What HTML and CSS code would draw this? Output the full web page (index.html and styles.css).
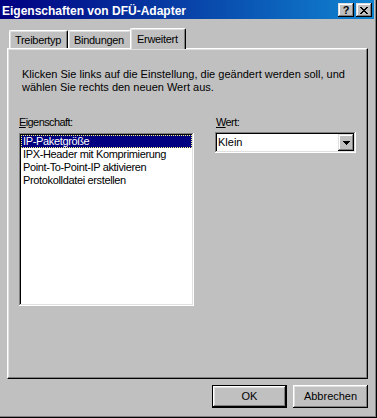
FILE: index.html
```html
<!DOCTYPE html>
<html lang="de">
<head>
<meta charset="utf-8">
<title>Eigenschaften von DFÜ-Adapter</title>
<link rel="stylesheet" href="styles.css">
</head>
<body>
<div class="window">
  <div class="titlebar">
    <span class="title">Eigenschaften von DFÜ-Adapter</span>
    <div class="title-buttons">
      <div class="tbtn help">?</div>
      <div class="tbtn close">
        <svg width="8" height="7" viewBox="0 0 8 7" shape-rendering="crispEdges">
          <path fill="#000" d="M0 0h2v1H0zM6 0h2v1H6zM1 1h2v1H1zM5 1h2v1H5zM2 2h4v1H2zM3 3h2v1H3zM2 4h4v1H2zM1 5h2v1H1zM5 5h2v1H5zM0 6h2v1H0zM6 6h2v1H6z"/>
        </svg>
      </div>
    </div>
  </div>
  <div class="body">
    <div class="tabs">
      <div class="tab tab-treiber">Treibertyp</div>
      <div class="tab tab-bind">Bindungen</div>
      <div class="tab tab-erw active">Erweitert</div>
    </div>
    <div class="panel">
      <p class="desc">Klicken Sie links auf die Einstellung, die geändert werden soll, und wählen Sie rechts den neuen Wert aus.</p>
      <div class="fields">
        <div class="field-left">
          <div class="label"><u>E</u>igenschaft:</div>
          <div class="listbox">
            <div class="item selected">IP-Paketgröße</div>
            <div class="item">IPX-Header mit Komprimierung</div>
            <div class="item">Point-To-Point-IP aktivieren</div>
            <div class="item">Protokolldatei erstellen</div>
          </div>
        </div>
        <div class="field-right">
          <div class="label label-wert"><u>W</u>ert:</div>
          <div class="combo">
            <span class="combo-value">Klein</span>
            <div class="combo-arrow">
              <svg width="7" height="4" viewBox="0 0 7 4" shape-rendering="crispEdges"><path fill="#000" d="M0 0h7v1H0zM1 1h5v1H1zM2 2h3v1H2zM3 3h1v1H3z"/></svg>
            </div>
          </div>
        </div>
      </div>
    </div>
    <div class="buttons">
      <div class="btn default"><span class="btn-inner">OK</span></div>
      <div class="btn"><span class="btn-inner">Abbrechen</span></div>
    </div>
  </div>
</div>
</body>
</html>
```

FILE: styles.css
```css
* { box-sizing: border-box; }
html, body { margin: 0; padding: 0; }
body {
  width: 377px;
  height: 418px;
  overflow: hidden;
  background: #c0c0c0;
  font-family: "Liberation Sans", Arial, sans-serif;
  font-size: 11px;
  color: #000;
}
.window {
  width: 377px;
  height: 418px;
  background: #c0c0c0;
  padding-right: 3px;
  box-shadow: inset -1px -1px #000, inset -2px -2px #808080;
  display: flex;
  flex-direction: column;
}
.titlebar {
  height: 19px;
  flex: none;
  background: linear-gradient(to right, #000080, #1084d0);
  display: flex;
  align-items: flex-start;
  justify-content: space-between;
  padding: 0 2px 0 2px;
}
.title {
  color: #fff;
  font-weight: bold;
  font-size: 12px;
  line-height: 14px;
  margin-top: 4px;
}
.title-buttons { display: flex; gap: 2px; margin-top: 3px; }
.tbtn {
  width: 16px;
  height: 14px;
  background: #c0c0c0;
  box-shadow: inset -1px -1px #000, inset 1px 1px #dfdfdf, inset -2px -2px #808080, inset 2px 2px #fff;
  display: flex;
  align-items: center;
  justify-content: center;
}
.help { font-weight: bold; font-size: 11px; line-height: 11px; padding-top: 1px; }
.close svg { display: block; }

.body {
  flex: 1;
  padding: 9px 6px 0 7px;
  display: flex;
  flex-direction: column;
}
.tabs {
  display: flex;
  align-items: flex-end;
  padding-left: 2px;
  height: 20px;
  position: relative;
  z-index: 1;
  letter-spacing: -0.3px;
}
.tab {
  height: 18px;
  line-height: 16px;
  padding: 1px 0 0 5px;
  border-top: 1px solid #fff;
  border-left: 1px solid #fff;
  border-right: 1px solid #000;
  border-top-left-radius: 2px;
  border-top-right-radius: 2px;
  box-shadow: inset -1px 0 #808080, inset 1px 1px #dfdfdf;
  background: #c0c0c0;
  white-space: nowrap;
}
.tab-treiber { width: 59px; }
.tab-bind { width: 64px; }
.tab-erw { width: 56px; }
.tab.active {
  height: 21px;
  margin: 0 -2px -1px -2px;
  padding-top: 2px;
  padding-left: 6px;
}
.panel {
  height: 331px;
  flex: none;
  border-top: 1px solid #fff;
  border-left: 1px solid #fff;
  border-right: 1px solid #000;
  border-bottom: 1px solid #000;
  box-shadow: inset -1px -1px #808080, inset 1px 1px #dfdfdf;
  padding: 19px 10px 0 14px;
}
.desc {
  margin: 0;
  line-height: 13px;
  width: 335px;
}
.fields {
  display: flex;
  margin: 22px 0 0 -3px;
  gap: 21px;
}
.label { line-height: 13px; margin-bottom: 4px; letter-spacing: -0.6px; }
.label u { text-decoration: underline; text-underline-offset: 1px; }
.label-wert { padding-left: 1px; }
.listbox {
  width: 175px;
  height: 173px;
  background: #fff;
  padding: 2px;
  box-shadow: inset -1px -1px #fff, inset 1px 1px #808080, inset -2px -2px #dfdfdf, inset 2px 2px #000;
}
.item {
  height: 13px;
  line-height: 13px;
  padding-left: 2px;
  white-space: nowrap;
  letter-spacing: -0.35px;
}
.item.selected {
  background: #000080;
  color: #fff;
  outline: 1px dotted #ffff80;
  outline-offset: -1px;
}
.combo {
  width: 141px;
  height: 21px;
  margin-top: -1px;
  background: #fff;
  padding: 2px;
  display: flex;
  align-items: center;
  justify-content: space-between;
  box-shadow: inset -1px -1px #fff, inset 1px 1px #808080, inset -2px -2px #dfdfdf, inset 2px 2px #000;
}
.combo-value { padding-left: 1px; line-height: 13px; }
.combo-arrow {
  width: 16px;
  height: 17px;
  background: #c0c0c0;
  box-shadow: inset -1px -1px #000, inset 1px 1px #dfdfdf, inset -2px -2px #808080, inset 2px 2px #fff;
  display: flex;
  align-items: center;
  justify-content: center;
}
.combo-arrow svg { display: block; }

.buttons {
  display: flex;
  justify-content: flex-end;
  gap: 6px;
  margin-top: 6px;
}
.btn {
  width: 75px;
  height: 23px;
  background: #c0c0c0;
  box-shadow: inset -1px -1px #000, inset 1px 1px #fff, inset -2px -2px #808080, inset 2px 2px #dfdfdf;
  display: flex;
  align-items: center;
  justify-content: center;
}
.btn.default {
  border: 1px solid #000;
}
.btn-inner { line-height: 13px; }
```
